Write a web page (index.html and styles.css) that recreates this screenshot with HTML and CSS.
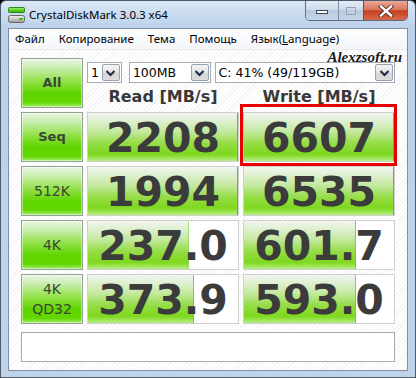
FILE: index.html
```html
<!DOCTYPE html>
<html>
<head>
<meta charset="utf-8">
<link rel="stylesheet" href="styles.css">
</head>
<body>
<div class="window">
  <div class="titlebar">
    <svg class="appicon" width="17" height="16" viewBox="0 0 17 16">
      <defs>
        <linearGradient id="gbar" x1="0" y1="0" x2="0" y2="1">
          <stop offset="0" stop-color="#9af06a"/>
          <stop offset="1" stop-color="#2fb400"/>
        </linearGradient>
        <linearGradient id="dbody" x1="0" y1="0" x2="0" y2="1">
          <stop offset="0" stop-color="#f4f4f4"/>
          <stop offset="1" stop-color="#9a9a9a"/>
        </linearGradient>
      </defs>
      <rect x="0.5" y="0.5" width="16" height="5" rx="1" fill="url(#gbar)" stroke="#2a8a10"/>
      <rect x="0.5" y="8.5" width="16" height="7" rx="2" fill="url(#dbody)" stroke="#6a6a6a"/>
      <rect x="11" y="11" width="4" height="2" fill="#38c800"/>
    </svg>
    <span class="title">CrystalDiskMark 3.0.3 x64</span>
    <div class="winbtns">
      <div class="wbtn wmin">
        <svg width="14" height="8" viewBox="0 0 14 8"><rect x="1.5" y="3.5" width="11" height="3" fill="#fff" stroke="#3a4656"/></svg>
      </div>
      <div class="wbtn wmax">
        <svg width="12" height="10" viewBox="0 0 12 10"><rect x="1.5" y="1.5" width="9" height="7" fill="none" stroke="#93a3b8"/><rect x="3.5" y="3.5" width="5" height="3" fill="none" stroke="#c7d2df"/></svg>
      </div>
      <div class="wbtn wclose">
        <svg width="16" height="12" viewBox="0 0 16 12">
          <path d="M3 1.5 L13 10.5 M13 1.5 L3 10.5" stroke="#5a2a22" stroke-width="4.2" stroke-linecap="square"/>
          <path d="M3 1.5 L13 10.5 M13 1.5 L3 10.5" stroke="#fff" stroke-width="2.4" stroke-linecap="square"/>
        </svg>
      </div>
    </div>
  </div>
  <div class="client">
    <div class="menubar">
      <span class="mi">Файл</span>
      <span class="mi">Копирование</span>
      <span class="mi">Тема</span>
      <span class="mi">Помощь</span>
      <span class="mi">Язык(<u>L</u>anguage)</span>
    </div>
    <div class="content">
      <div class="watermark">Alexzsoft.ru</div>
      <div class="grid">
        <div class="btn bold">All</div>
        <div class="controls">
          <div class="combos">
            <div class="combo c1"><span class="ctext">1</span><span class="cdrop"><svg width="11" height="8" viewBox="0 0 11 8"><path d="M1.5 2 L5.5 6 L9.5 2" fill="none" stroke="#1b2a4a" stroke-width="2"/></svg></span></div>
            <div class="combo c2"><span class="ctext">100MB</span><span class="cdrop"><svg width="11" height="8" viewBox="0 0 11 8"><path d="M1.5 2 L5.5 6 L9.5 2" fill="none" stroke="#1b2a4a" stroke-width="2"/></svg></span></div>
            <div class="combo c3"><span class="ctext">C: 41% (49/119GB)</span><span class="cdrop"><svg width="11" height="8" viewBox="0 0 11 8"><path d="M1.5 2 L5.5 6 L9.5 2" fill="none" stroke="#1b2a4a" stroke-width="2"/></svg></span></div>
          </div>
          <div class="headers">
            <div class="hdr">Read [MB/s]</div>
            <div class="hdr">Write [MB/s]</div>
          </div>
        </div>

        <div class="btn bold">Seq</div>
        <div class="val" style="--w:100%">2208</div>
        <div class="val mark" style="--w:100%">6607<span class="redbox"></span></div>

        <div class="btn">512K</div>
        <div class="val" style="--w:100%">1994</div>
        <div class="val" style="--w:100%">6535</div>

        <div class="btn">4K</div>
        <div class="val" style="--w:67%">237.0</div>
        <div class="val" style="--w:74.5%">601.7</div>

        <div class="btn two">4K<br>QD32</div>
        <div class="val" style="--w:70.5%">373.9</div>
        <div class="val" style="--w:74.5%">593.0</div>
      </div>
      <div class="status"></div>
    </div>
  </div>
</div>
</body>
</html>
```

FILE: styles.css
```css
* { box-sizing: border-box; }
html, body { margin: 0; padding: 0; }
body { width: 416px; height: 378px; overflow: hidden; background: #000; }

.window {
  width: 416px;
  height: 378px;
  border: 1px solid #4d5a6a;
  border-radius: 6px 6px 0 0;
  background: linear-gradient(to bottom, #dbe8f6 0, #c8dbf0 14px, #bcd2ea 27px, #bfd4eb 100%);
  display: flex;
  flex-direction: column;
}

.titlebar {
  height: 27px;
  display: flex;
  align-items: flex-start;
  padding: 0 7px 0 7px;
  position: relative;
}
.appicon { margin-top: 6px; flex: none; }
.title {
  font-family: "Noto Sans", sans-serif;
  font-size: 11.5px;
  color: #000;
  margin-left: 4px;
  margin-top: 6px;
  line-height: 16px;
}
.winbtns {
  margin-left: auto;
  display: flex;
  height: 20px;
  border: 1px solid #5c6b80;
  border-top: none;
  border-radius: 0 0 5px 5px;
  overflow: hidden;
}
.wbtn {
  height: 19px;
  display: flex;
  align-items: center;
  justify-content: center;
}
.wmin {
  width: 33px;
  background: linear-gradient(to bottom, #e3ecf6 0, #cfdbea 45%, #b8c9de 50%, #c6d6ea 100%);
  border-right: 1px solid #7f90a6;
}
.wmax {
  width: 25px;
  background: linear-gradient(to bottom, #e3ecf6 0, #cfdbea 45%, #b8c9de 50%, #c6d6ea 100%);
  border-right: 1px solid #7a4a40;
}
.wclose {
  width: 43px;
  background: linear-gradient(to bottom, #e8a898 0, #d9765f 45%, #c5401f 52%, #d6694a 100%);
}

.client {
  margin: 0 7px;
  height: 343px;
  border: 1px solid #8090a4;
  background: #fff;
  display: flex;
  flex-direction: column;
}

.menubar {
  height: 21px;
  display: flex;
  align-items: center;
  background: linear-gradient(to bottom, #fdfdfe, #f4f6f9);
  border-bottom: 1px solid #e6e9ee;
  font-family: "Noto Sans", sans-serif;
  font-size: 11.5px;
  color: #000;
}
.mi { padding: 0 7px; line-height: 18px; }
.mi:first-child { padding-left: 6px; }

.content {
  position: relative;
  flex: 1;
  padding: 8px 12px 8px 12px;
  background: repeating-linear-gradient(135deg, #ffffff 0, #ffffff 2px, #f3f3f3 2px, #f3f3f3 3px);
}

.watermark {
  position: absolute;
  top: -1px;
  right: 5px;
  font-family: "Liberation Serif", serif;
  font-weight: bold;
  font-style: italic;
  font-size: 15px;
  color: #1a1a1a;
  line-height: 17px;
}

.grid {
  display: grid;
  grid-template-columns: 62px 152px 152px;
  grid-auto-rows: 50px;
  column-gap: 4px;
  row-gap: 4px;
}

.btn {
  border: 1px solid #94a294;
  background: linear-gradient(to bottom, #eaf6e2 0, #c9eeb0 18%, #8fe040 48%, #5fd500 72%, #62d700 90%, #a6ec72 100%);
  box-shadow: inset 0 0 0 1px rgba(255,255,255,0.45);
  display: flex;
  align-items: center;
  justify-content: center;
  text-align: center;
  font-family: "DejaVu Sans", sans-serif;
  font-size: 14px;
  color: #3a4636;
  line-height: 20px;
}
.btn.bold { font-weight: bold; font-size: 13px; }

.controls {
  grid-column: 2 / 4;
  padding-top: 4px;
  position: relative;
}
.combos { display: flex; height: 21px; }
.combo {
  height: 21px;
  border: 1px solid #a3abb6;
  background: #fff;
  display: flex;
  align-items: stretch;
  font-family: "DejaVu Sans", sans-serif;
  font-size: 12.5px;
  color: #000;
}
.c1 { width: 35px; }
.c2 { width: 82px; margin-left: 7px; }
.c3 { width: 181px; margin-left: 4px; }
.ctext { flex: 1; padding-left: 3px; line-height: 19px; white-space: nowrap; overflow: hidden; }
.cdrop {
  width: 18px;
  margin: 1px;
  border: 1px solid #97a3b3;
  border-radius: 2px;
  background: linear-gradient(to bottom, #f6f6f6, #e3e3e3 50%, #d4d4d4 51%, #dedede);
  display: flex;
  align-items: center;
  justify-content: center;
}

.headers {
  display: grid;
  grid-template-columns: 152px 152px;
  column-gap: 4px;
  margin-top: 5px;
}
.hdr {
  text-align: center;
  font-family: "DejaVu Sans", sans-serif;
  font-weight: bold;
  font-size: 16px;
  line-height: 18px;
  color: #383838;
}

.val {
  position: relative;
  border: 1px solid #cfcfcf;
  background-color: #fff;
  background-image:
    linear-gradient(to right, transparent calc(100% - 1px), #5cc618 calc(100% - 1px)),
    linear-gradient(to bottom, #f2f5f0 0, #e4f1da 12%, #c4e9a0 38%, #94dc44 64%, #7ed81e 86%, #b6ee84 100%);
  background-size: var(--w) 100%, var(--w) 100%;
  background-repeat: no-repeat;
  display: flex;
  align-items: center;
  justify-content: center;
  font-family: "DejaVu Sans", sans-serif;
  font-weight: bold;
  font-size: 41px;
  color: #3b3b3b;
  line-height: 48px;
  padding-top: 1px;
}
.redbox {
  position: absolute;
  left: -4px;
  right: -3px;
  top: -9px;
  bottom: -5px;
  border: 3px solid #e80000;
  pointer-events: none;
}

.status {
  margin-top: 8px;
  height: 30px;
  border: 1px solid #a9a9a9;
  background: #fff;
}
```
